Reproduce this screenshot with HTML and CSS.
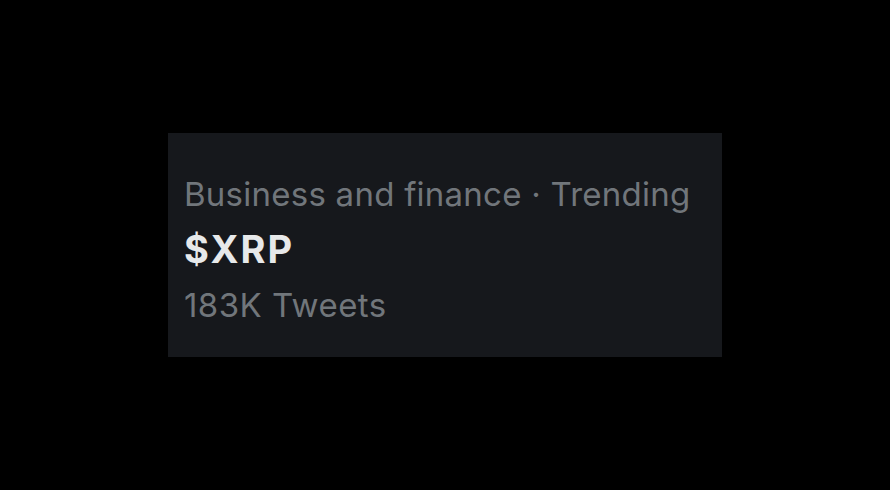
FILE: index.html
```html
<!DOCTYPE html>
<html>
<head>
<meta charset="utf-8">
<link rel="stylesheet" href="styles.css">
</head>
<body>
<div class="card">
  <div class="meta">Business and finance · Trending</div>
  <div class="title">$XRP</div>
  <div class="count">183K Tweets</div>
</div>
</body>
</html>
```
FILE: styles.css
```css
html, body {
  margin: 0;
  padding: 0;
  background: #000;
}
body {
  width: 890px;
  height: 490px;
  display: flex;
  align-items: center;
  justify-content: center;
  font-family: Inter, "Noto Sans", sans-serif;
}
.card {
  box-sizing: border-box;
  width: 554px;
  height: 224px;
  background: #16181c;
  padding: 34px 16px 0 16px;
}
.meta, .count {
  color: #71767b;
  font-size: 33px;
  line-height: 55px;
  white-space: nowrap;
}
.meta {
  letter-spacing: 0.25px;
}
.title {
  color: #e7e9ea;
  font-size: 38px;
  font-weight: 700;
  line-height: 55px;
  letter-spacing: 2px;
}
.count {
  line-height: 57px;
  letter-spacing: 0.45px;
}
```
